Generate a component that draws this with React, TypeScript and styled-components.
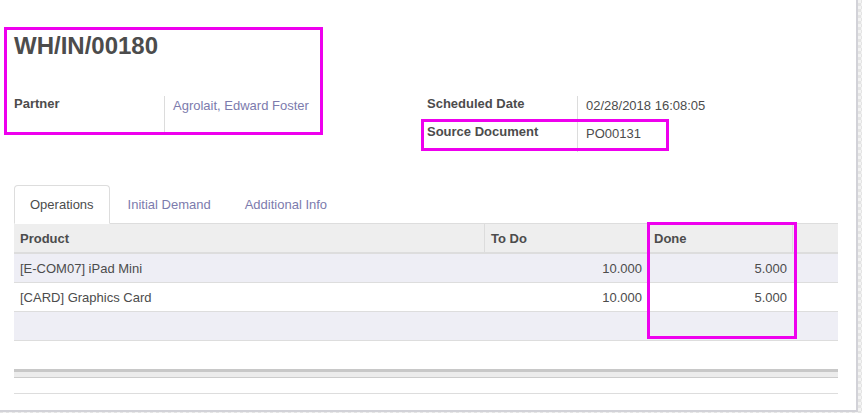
import React from "react";
import styled, { createGlobalStyle } from "styled-components";

const Global = createGlobalStyle`
  html, body {
    margin: 0;
    padding: 0;
  }
  body {
    font-family: "Liberation Sans", Arial, sans-serif;
    font-size: 13px;
    color: #4c4c4c;
    background-color: #f3f3f3;
    background-image:
      linear-gradient(45deg, #e4e4e4 25%, transparent 25%, transparent 75%, #e4e4e4 75%),
      linear-gradient(45deg, #e4e4e4 25%, transparent 25%, transparent 75%, #e4e4e4 75%);
    background-size: 6px 6px;
    background-position: 0 0, 3px 3px;
    width: 862px;
    height: 413px;
    overflow: hidden;
  }
`;

const Sheet = styled.div`
  position: relative;
  box-sizing: border-box;
  width: 858px;
  height: 412px;
  background: #fff;
  border-right: 2px solid #d2d2d8;
  border-bottom: 2px solid #d2d2d8;
  padding: 32px 18px 0 14px;
`;

const Title = styled.h1`
  margin: 0;
  font-size: 24px;
  line-height: 28px;
  font-weight: bold;
  color: #4c4c4c;
`;

const Groups = styled.div`
  display: grid;
  grid-template-columns: 413px 413px;
  margin-top: 36px;
`;

const Group = styled.div`
  display: flex;
  flex-direction: column;
`;

const FieldRow = styled.div<{ $h: number }>`
  display: grid;
  grid-template-columns: 150px 1fr;
  height: ${(p) => p.$h}px;
`;

const Label = styled.div`
  font-weight: bold;
  line-height: 16px;
  color: #4c4c4c;
`;

const Value = styled.div<{ $link?: boolean }>`
  border-left: 1px solid #dcdcdc;
  padding: 2px 0 0 8px;
  line-height: 16px;
  color: ${(p) => (p.$link ? "#7c7bad" : "#4c4c4c")};
`;

const Tabs = styled.div`
  display: flex;
  margin-top: 33px;
  border-bottom: 1px solid #dddddd;
`;

const Tab = styled.div<{ $active?: boolean }>`
  padding: 10px 15px;
  line-height: 17px;
  margin-right: 2px;
  margin-bottom: -1px;
  border: 1px solid ${(p) => (p.$active ? "#dddddd" : "transparent")};
  border-bottom-color: transparent;
  border-radius: 4px 4px 0 0;
  background: ${(p) => (p.$active ? "#fff" : "transparent")};
  color: ${(p) => (p.$active ? "#4c4c4c" : "#7c7bad")};
`;

const cols = "470px 163px 145px 1fr";

const HeadRow = styled.div`
  display: grid;
  grid-template-columns: ${cols};
  height: 28px;
  background: #eeeeee;
  border-bottom: 2px solid #dddddd;
`;

const HeadCell = styled.div<{ $sep?: boolean }>`
  display: flex;
  align-items: center;
  padding: 0 5px 0 6px;
  font-weight: bold;
  color: #4c4c4c;
  border-left: ${(p) => (p.$sep ? "1px solid #dcdcdc" : "none")};
`;

const BodyRow = styled.div<{ $striped?: boolean }>`
  display: grid;
  grid-template-columns: ${cols};
  height: 28px;
  border-bottom: 1px solid #dddddd;
  background: ${(p) => (p.$striped ? "#eeeef5" : "#fff")};
`;

const Cell = styled.div<{ $num?: boolean }>`
  display: flex;
  align-items: center;
  justify-content: ${(p) => (p.$num ? "flex-end" : "flex-start")};
  padding: 0 5px 0 6px;
  color: #4c4c4c;
`;

const Footer = styled.div`
  margin-top: 28px;
  height: 5px;
  background: #ececec;
  border-top: 3px solid #c8c8c8;
  border-bottom: 1px solid #cccccc;
`;

const Rule = styled.div`
  margin-top: 15px;
  border-top: 1px solid #dddddd;
`;

const Highlight = styled.div<{ $x: number; $y: number; $w: number; $h: number }>`
  position: absolute;
  box-sizing: border-box;
  left: ${(p) => p.$x}px;
  top: ${(p) => p.$y}px;
  width: ${(p) => p.$w}px;
  height: ${(p) => p.$h}px;
  border: 3px solid #ee00ee;
  pointer-events: none;
`;

const lines = [
  { product: "[E-COM07] iPad Mini", todo: "10.000", done: "5.000" },
  { product: "[CARD] Graphics Card", todo: "10.000", done: "5.000" },
];

export default function App() {
  return (
    <>
      <Global />
      <Sheet>
        <Title>WH/IN/00180</Title>
        <Groups>
          <Group>
            <FieldRow $h={36}>
              <Label>Partner</Label>
              <Value $link>Agrolait, Edward Foster</Value>
            </FieldRow>
          </Group>
          <Group>
            <FieldRow $h={28}>
              <Label>Scheduled Date</Label>
              <Value>02/28/2018 16:08:05</Value>
            </FieldRow>
            <FieldRow $h={28}>
              <Label>Source Document</Label>
              <Value>PO00131</Value>
            </FieldRow>
          </Group>
        </Groups>
        <Tabs>
          <Tab $active>Operations</Tab>
          <Tab>Initial Demand</Tab>
          <Tab>Additional Info</Tab>
        </Tabs>
        <HeadRow>
          <HeadCell>Product</HeadCell>
          <HeadCell $sep>To Do</HeadCell>
          <HeadCell $sep>Done</HeadCell>
          <HeadCell $sep />
        </HeadRow>
        {lines.map((l, i) => (
          <BodyRow key={i} $striped={i % 2 === 0}>
            <Cell>{l.product}</Cell>
            <Cell $num>{l.todo}</Cell>
            <Cell $num>{l.done}</Cell>
            <Cell />
          </BodyRow>
        ))}
        <BodyRow $striped>
          <Cell />
          <Cell />
          <Cell />
          <Cell />
        </BodyRow>
        <Footer />
        <Rule />
        <Highlight $x={4} $y={27} $w={319} $h={108} />
        <Highlight $x={421} $y={119} $w={248} $h={32} />
        <Highlight $x={647} $y={222} $w={150} $h={117} />
      </Sheet>
    </>
  );
}
